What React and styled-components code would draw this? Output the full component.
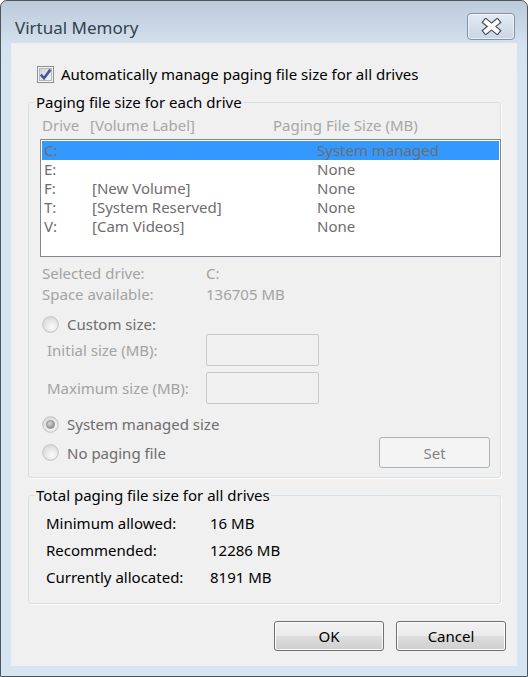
import React, { useId } from 'react';
import styled, { createGlobalStyle } from 'styled-components';

const Global = createGlobalStyle`
  html, body {
    margin: 0;
    padding: 0;
    background: #ffffff;
  }
  body {
    font-family: "Noto Sans", "Open Sans", sans-serif;
  }
`;

const Window = styled.div`
  box-sizing: border-box;
  width: 528px;
  height: 677px;
  border: 1px solid #50555c;
  border-radius: 7px 7px 0 0;
  background: linear-gradient(#bccbda 0px, #cbd9e7 28px, #d4e1ef 43px, #d7e4f2 80px, #d7e4f2 100%);
  display: flex;
  flex-direction: column;
  overflow: hidden;
`;

const TitleBar = styled.div`
  height: 42px;
  flex: none;
  display: flex;
  align-items: flex-start;
  justify-content: space-between;
  padding: 0 12px 0 14px;
`;

const Title = styled.div`
  margin-top: 16px;
  font-size: 17px;
  line-height: 22px;
  color: #34414f;
`;

const CloseButton = styled.button`
  margin-top: 12px;
  width: 48px;
  height: 27px;
  padding: 0;
  box-sizing: border-box;
  border: 1px solid #8393a7;
  border-radius: 4px;
  background: linear-gradient(#e2eaf3 0%, #d6e0eb 50%, #cad6e4 100%);
  box-shadow: inset 0 0 0 1px rgba(255, 255, 255, 0.55);
  display: flex;
  align-items: center;
  justify-content: center;
`;

const Client = styled.div`
  flex: 1;
  margin: 0 10px 10px;
  background: #f0f0f0;
  padding: 23px 16px 0 17px;
  display: flex;
  flex-direction: column;
  font-size: 15px;
  color: #000;
`;

const CheckRow = styled.label`
  display: flex;
  align-items: center;
  gap: 7px;
  margin-left: 9px;
  height: 17px;
  line-height: 17px;
  margin-bottom: 9px;
`;

const Group = styled.fieldset`
  margin: 0;
  padding: ${(p) => p.$pad};
  border: 1px solid #d5dfe5;
  border-radius: 3px;
  box-shadow: 1px 1px 0 #ffffff;
  min-width: 0;
  display: flex;
  flex-direction: column;
  & + & {
    margin-top: 7px;
  }
`;

const Legend = styled.legend`
  margin-left: 6px;
  padding: 0 1px;
  line-height: 20px;
  color: #000;
`;

const ListHeader = styled.div`
  display: grid;
  grid-template-columns: 48px 183px 1fr;
  padding-left: 13px;
  line-height: 20px;
  color: #a7a7a7;
`;

const ListBox = styled.div`
  box-sizing: border-box;
  height: 118px;
  margin: 4px -1px 0 11px;
  border: 1px solid #828790;
  padding: 1px;
  background: #ffffff;
`;

const ListRow = styled.div`
  display: grid;
  grid-template-columns: 48px 225px 1fr;
  height: 19px;
  line-height: 19px;
  padding-left: 2px;
  color: #6d6d6d;
  background: ${(p) => (p.$selected ? '#3399ff' : 'transparent')};
`;

const InfoGrid = styled.div`
  display: grid;
  grid-template-columns: 164px 1fr;
  padding-left: 13px;
  margin-top: 6px;
  line-height: 21px;
  color: #a3a3a3;
`;

const Option = styled.label`
  display: flex;
  align-items: center;
  gap: 8px;
  height: 20px;
  line-height: 20px;
  margin-left: 13px;
  margin-top: ${(p) => p.$top || 0}px;
  color: #6d6d6d;
`;

const SizeRow = styled.div`
  display: grid;
  grid-template-columns: 159px 113px;
  align-items: center;
  height: 32px;
  padding-left: 18px;
  margin-top: ${(p) => p.$top || 0}px;
  color: #a3a3a3;
`;

const SizeInput = styled.div`
  box-sizing: border-box;
  height: 32px;
  border: 1px solid #c9c9c9;
  border-radius: 2px;
  background: #f0f0f0;
`;

const LastRow = styled.div`
  display: flex;
  align-items: center;
  justify-content: space-between;
  height: 31px;
  margin-top: 3px;
`;

const Button = styled.button`
  box-sizing: border-box;
  width: ${(p) => p.$w}px;
  height: ${(p) => p.$h}px;
  margin: 0;
  padding: 0;
  border-radius: 3px;
  font-family: inherit;
  font-size: 15px;
  border: 1px solid ${(p) => (p.disabled ? '#adb2b5' : '#707070')};
  color: ${(p) => (p.disabled ? '#838383' : '#000')};
  background: ${(p) =>
    p.disabled
      ? '#f4f4f4'
      : 'linear-gradient(#f2f2f2 0%, #ebebeb 49%, #dddddd 51%, #cfcfcf 100%)'};
  box-shadow: ${(p) => (p.disabled ? 'none' : 'inset 0 0 0 1px #fcfcfc')};
`;

const SetButton = styled(Button)`
  margin-right: 10px;
`;

const TotalsGrid = styled.div`
  display: grid;
  grid-template-columns: 164px 1fr;
  padding-left: 17px;
  line-height: 27px;
  color: #000;
`;

const Footer = styled.div`
  display: flex;
  justify-content: flex-end;
  gap: 12px;
  margin: 17px -5px 0 0;
`;

function CloseGlyph() {
  return (
    <svg width="21" height="17" viewBox="0 0 21 17">
      <path d="M5 4 L16 13 M16 4 L5 13" stroke="#4a4f57" strokeWidth="6.6" strokeLinecap="square" />
      <path d="M5 4 L16 13 M16 4 L5 13" stroke="#ffffff" strokeWidth="4.2" strokeLinecap="square" />
    </svg>
  );
}

function CheckBox() {
  const id = useId().replace(/:/g, '');
  return (
    <svg width="17" height="17" viewBox="0 0 17 17">
      <defs>
        <linearGradient id={`cb${id}`} x1="0" y1="0" x2="1" y2="1">
          <stop offset="0" stopColor="#cdd1d8" />
          <stop offset="1" stopColor="#f7f7f7" />
        </linearGradient>
      </defs>
      <rect x="0.5" y="0.5" width="16" height="16" fill="#f4f4f4" stroke="#8e8f8f" />
      <rect x="2.5" y="2.5" width="12" height="12" fill={`url(#cb${id})`} stroke="#b4b8bf" />
      <path d="M3.8 8.6 L7 12.2 L13.4 3.6" fill="none" stroke="#44599a" strokeWidth="2.6" />
    </svg>
  );
}

function Radio({ checked }) {
  const id = useId().replace(/:/g, '');
  return (
    <svg width="17" height="17" viewBox="0 0 17 17">
      <defs>
        <radialGradient id={`rf${id}`} cx="0.6" cy="0.65" r="0.6">
          <stop offset="0" stopColor="#fbfbfb" />
          <stop offset="1" stopColor="#dcdcdc" />
        </radialGradient>
        <radialGradient id={`rd${id}`} cx="0.4" cy="0.35" r="0.7">
          <stop offset="0" stopColor="#d6d6d6" />
          <stop offset="1" stopColor="#8c8c8c" />
        </radialGradient>
      </defs>
      <circle cx="8.5" cy="8.5" r="7.8" fill={`url(#rf${id})`} stroke="#c0c0c0" strokeWidth="1" />
      {checked && <circle cx="8.5" cy="8.5" r="4" fill={`url(#rd${id})`} stroke="#8a8a8a" strokeWidth="0.8" />}
    </svg>
  );
}

const drives = [
  { letter: 'C:', label: '', size: 'System managed', selected: true },
  { letter: 'E:', label: '', size: 'None' },
  { letter: 'F:', label: '[New Volume]', size: 'None' },
  { letter: 'T:', label: '[System Reserved]', size: 'None' },
  { letter: 'V:', label: '[Cam Videos]', size: 'None' },
];

const totals = [
  ['Minimum allowed:', '16 MB'],
  ['Recommended:', '12286 MB'],
  ['Currently allocated:', '8191 MB'],
];

export default function App() {
  return (
    <>
      <Global />
      <Window>
        <TitleBar>
          <Title>Virtual Memory</Title>
          <CloseButton aria-label="Close">
            <CloseGlyph />
          </CloseButton>
        </TitleBar>
        <Client>
          <CheckRow>
            <CheckBox />
            <span>Automatically manage paging file size for all drives</span>
          </CheckRow>

          <Group $pad="3px 0 9px 0">
            <Legend>Paging file size for each drive</Legend>
            <ListHeader>
              <span>Drive</span>
              <span>[Volume Label]</span>
              <span>Paging File Size (MB)</span>
            </ListHeader>
            <ListBox>
              {drives.map((d) => (
                <ListRow key={d.letter} $selected={d.selected}>
                  <span>{d.letter}</span>
                  <span>{d.label}</span>
                  <span>{d.size}</span>
                </ListRow>
              ))}
            </ListBox>
            <InfoGrid>
              <span>Selected drive:</span>
              <span>C:</span>
              <span>Space available:</span>
              <span>136705 MB</span>
            </InfoGrid>
            <Option $top={9}>
              <Radio />
              <span>Custom size:</span>
            </Option>
            <SizeRow>
              <span>Initial size (MB):</span>
              <SizeInput />
            </SizeRow>
            <SizeRow $top={6}>
              <span>Maximum size (MB):</span>
              <SizeInput />
            </SizeRow>
            <Option $top={10}>
              <Radio checked />
              <span>System managed size</span>
            </Option>
            <LastRow>
              <Option>
                <Radio />
                <span>No paging file</span>
              </Option>
              <SetButton $w={111} $h={31} disabled>
                Set
              </SetButton>
            </LastRow>
          </Group>

          <Group $pad="4.5px 0 12px 0">
            <Legend>Total paging file size for all drives</Legend>
            <TotalsGrid>
              {totals.map(([k, v]) => (
                <React.Fragment key={k}>
                  <span>{k}</span>
                  <span>{v}</span>
                </React.Fragment>
              ))}
            </TotalsGrid>
          </Group>

          <Footer>
            <Button $w={110} $h={30}>OK</Button>
            <Button $w={110} $h={30}>Cancel</Button>
          </Footer>
        </Client>
      </Window>
    </>
  );
}
